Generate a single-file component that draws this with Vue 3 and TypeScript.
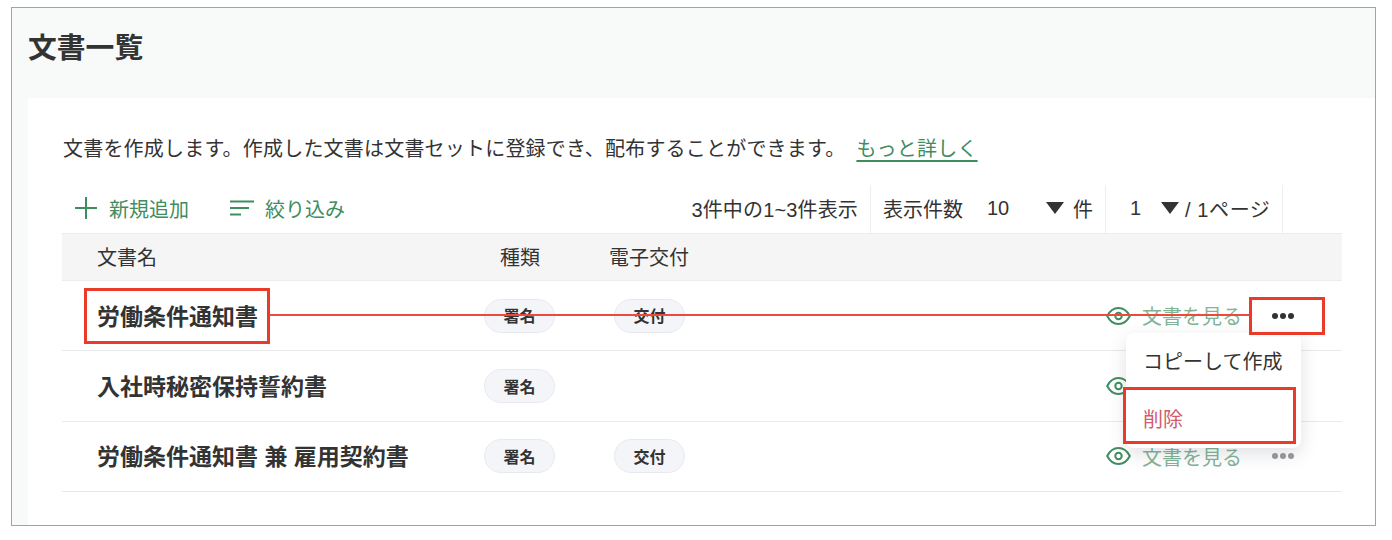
<script setup lang="ts">
interface Doc { name: string; delivery: boolean; active: boolean }
const docs: Doc[] = [
  { name: '労働条件通知書', delivery: true, active: true },
  { name: '入社時秘密保持誓約書', delivery: false, active: false },
  { name: '労働条件通知書 兼 雇用契約書', delivery: true, active: false },
]
</script>

<template>
  <div class="frame">
    <header class="page-head"><h1>文書一覧</h1></header>
    <main class="content">
      <p class="desc">
        <span>文書を作成します。作成した文書は文書セットに登録でき、配布することができます。</span>
        <a class="more">もっと詳しく</a>
      </p>
      <div class="toolbar">
        <button class="tool add">
          <svg width="24" height="24" viewBox="0 0 24 24" fill="none" stroke="currentColor" stroke-width="2"><path d="M12 1v22M1 12h22" /></svg>
          <span>新規追加</span>
        </button>
        <button class="tool filter">
          <svg width="24" height="24" viewBox="0 0 24 24" fill="none" stroke="currentColor" stroke-width="2"><path d="M0 5.500h24M0 12h19M0 18.500h11" /></svg>
          <span>絞り込み</span>
        </button>
        <div class="pager">
          <div class="seg seg-count">3件中の1~3件表示</div>
          <div class="seg seg-size">
            <span>表示件数</span><span class="val-size">10</span><i class="tri tri-size"></i><span>件</span>
          </div>
          <div class="seg seg-page">
            <span class="val-page">1</span><i class="tri tri-page"></i><span class="page-label">/ 1ページ</span>
          </div>
        </div>
      </div>
      <div class="thead">
        <span>文書名</span><span>種類</span><span>電子交付</span>
      </div>
      <div v-for="d in docs" :key="d.name" class="row">
        <div class="name">{{ d.name }}</div>
        <div class="cell"><span class="chip">署名</span></div>
        <div class="cell"><span v-if="d.delivery" class="chip">交付</span></div>
        <div class="view">
          <svg width="25" height="24" viewBox="0 0 25 24" fill="none" stroke="#3f8d5f" stroke-width="2"><path d="M1.200 12C4 6.500 8 4 12.500 4s8.500 2.500 11.300 8c-2.800 5.500-6.800 8-11.300 8S4 17.500 1.200 12z" /><circle cx="12.500" cy="12" r="3.200" /></svg>
          <span class="view-text">文書を見る</span>
        </div>
        <svg class="dots" :class="{ on: d.active }" width="24" height="8" viewBox="0 0 24 8" fill="currentColor"><circle cx="4" cy="4" r="3" /><circle cx="12" cy="4" r="3" /><circle cx="20" cy="4" r="3" /></svg>
      </div>
    </main>

    <div class="menu">
      <div class="menu-item">コピーして作成</div>
      <div class="menu-item danger">削除</div>
    </div>

    <div class="mark mark-name"></div>
    <div class="mark mark-dots"></div>
    <div class="mark mark-del"></div>
    <div class="mark-line"></div>
  </div>
</template>

<style>
html, body { margin: 0; background: #fff; }
</style>

<style scoped>
.frame {
  position: relative;
  box-sizing: border-box;
  width: 1365px;
  height: 519px;
  margin: 7px 0 0 11px;
  border: 1px solid #a3a3a3;
  background: #f8faf9;
  color: #333;
  font-family: "Liberation Sans", "Noto Sans CJK JP", sans-serif;
  font-size: 20px;
  overflow: hidden;
}
.page-head { height: 90px; box-sizing: border-box; padding: 21px 0 0 16px; }
h1 { margin: 0; font-size: 28.800px; line-height: 38px; font-weight: 700; }
.content {
  margin-left: 16px;
  height: 427px;
  box-sizing: border-box;
  padding: 0 33px 0 34px;
  background: #fff;
}
.desc { margin: 0; height: 87px; display: flex; align-items: center; gap: 11px; padding: 11px 0 0 1px; box-sizing: border-box; white-space: nowrap; letter-spacing: 0.2px; }
.more { color: #3f8d5f; text-decoration: underline; text-underline-offset: 4px; }
.toolbar { display: flex; align-items: center; height: 48px; }
.tool { display: flex; align-items: center; gap: 11px; border: 0; padding: 0 0 2px; background: none; color: #3f8d5f; font: inherit; }
.add { margin-left: 12px; }
.filter { margin-left: 41px; gap: 11px; }
.pager { margin-left: auto; margin-right: 59px; display: flex; height: 100%; }
.seg { display: flex; align-items: center; border-right: 1px solid #eee; white-space: nowrap; padding-bottom: 2px; box-sizing: border-box; }
.seg-count { padding-right: 12px; letter-spacing: 0.15px; }
.seg-size { width: 235px; padding-left: 12px; }
.seg-page { width: 177px; padding-left: 24px; }
.val-size { margin-left: 24px; width: 59px; }
.val-page { width: 31px; }
.page-label { letter-spacing: 0.6px; }
.tri { display: block; width: 0; height: 0; border-style: solid; border-color: #333 transparent transparent; border-width: 12px 9px 0; }
.tri-size { margin-right: 9px; }
.tri-page { margin-right: 6px; }
.thead {
  display: grid;
  grid-template-columns: 403px 109px 1fr;
  align-items: center;
  box-sizing: border-box;
  height: 48px;
  padding: 0 0 1px 35px;
  background: #f5f5f5;
  border-top: 1px solid #ececec;
  border-bottom: 1px solid #ececec;
}
.row {
  display: grid;
  grid-template-columns: 422px 130px 1fr auto 24px;
  align-items: center;
  box-sizing: border-box;
  height: 70.400px;
  padding-right: 47px;
  border-bottom: 1px solid #e9e9e9;
}
.name { padding: 0 0 2px 35px; font-size: 23px; font-weight: 700; white-space: nowrap; }
.cell { display: flex; align-items: center; }
.chip {
  display: inline-flex;
  align-items: center;
  justify-content: center;
  box-sizing: border-box;
  width: 71px;
  height: 34px;
  padding-bottom: 1px;
  border: 1px solid #e8eaf0;
  border-radius: 17px;
  background: #f4f5f9;
  font-size: 16px;
  font-weight: 700;
}
.view { display: flex; align-items: center; gap: 11px; margin-right: 29px; }
.view-text { color: #3f8d5f; opacity: 0.65; }
.dots { color: #9a9a9f; }
.dots.on { color: #333; }
.menu {
  position: absolute;
  left: 1114px;
  top: 325px;
  width: 175px;
  height: 115px;
  background: #fff;
  border-radius: 8px;
  box-shadow: 0 6px 18px rgba(60, 70, 80, 0.16);
}
.menu-item { display: flex; align-items: center; height: 54px; padding-left: 17px; white-space: nowrap; }
.danger { color: #cf5c6f; height: 61px; padding-top: 2px; box-sizing: border-box; }
.mark { position: absolute; box-sizing: border-box; border: 3px solid #e93a2a; }
.mark-name { left: 72px; top: 280px; width: 186px; height: 56px; }
.mark-dots { left: 1237px; top: 289px; width: 76px; height: 38px; }
.mark-del { left: 1111px; top: 379px; width: 173px; height: 57px; }
.mark-line { position: absolute; left: 258px; top: 306px; width: 979px; height: 2px; background: #ec4a3a; }
</style>
